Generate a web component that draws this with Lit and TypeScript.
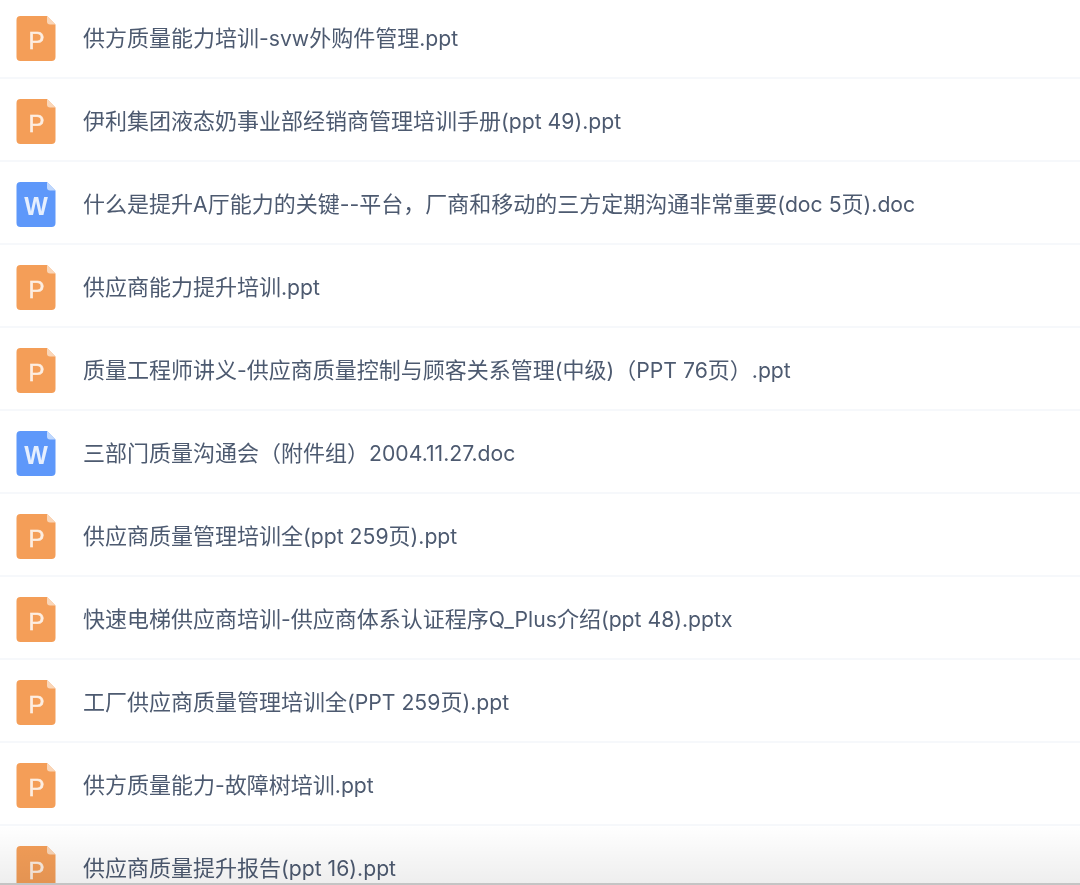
import { LitElement, html, css, svg } from "lit";
import { customElement } from "lit/decorators.js";

const rows: [string, string][] = [
  ["p", "供方质量能力培训-svw外购件管理.ppt"],
  ["p", "伊利集团液态奶事业部经销商管理培训手册(ppt 49).ppt"],
  ["w", "什么是提升A厅能力的关键--平台，厂商和移动的三方定期沟通非常重要(doc 5页).doc"],
  ["p", "供应商能力提升培训.ppt"],
  ["p", "质量工程师讲义-供应商质量控制与顾客关系管理(中级)（PPT 76页）.ppt"],
  ["w", "三部门质量沟通会（附件组）2004.11.27.doc"],
  ["p", "供应商质量管理培训全(ppt 259页).ppt"],
  ["p", "快速电梯供应商培训-供应商体系认证程序Q_Plus介绍(ppt 48).pptx"],
  ["p", "工厂供应商质量管理培训全(PPT 259页).ppt"],
  ["p", "供方质量能力-故障树培训.ppt"],
  ["p", "供应商质量提升报告(ppt 16).ppt"],
];

@customElement("app-root")
export class AppRoot extends LitElement {
  static styles = css`
    :host { display: block; width: 1080px; height: 885px; overflow: hidden; position: relative; background: #fff; }
    .list { display: flex; flex-direction: column; }
    .row { display: flex; align-items: center; padding: 20px 0 16px 16px; gap: 27px; border-bottom: 2px solid #f6f8fb; }
    .row:first-child { padding-top: 16px; }
    .row svg { flex: none; width: 40px; height: 45px; display: block; filter: blur(.5px); }
    .name { font: 22px/30px Inter, "Noto Sans CJK SC", sans-serif; color: #4d5a70; white-space: nowrap; position: relative; top: -1px; filter: blur(.25px); }
    .lat { font-size: 21.200px; }
    .shade { position: absolute; left: 0; right: 0; bottom: 0; height: 60px; background: linear-gradient(to bottom, rgba(0,0,0,0), rgba(0,0,0,.065)); border-bottom: 2px solid #c4c4c4; box-sizing: border-box; pointer-events: none; }
  `;

  icon(kind: string) {
    const main = kind === "p" ? "#f49e58" : "#5e98fa";
    const fold = kind === "p" ? "#fad6b8" : "#c0d8fd";
    const letter = kind === "p"
      ? svg`<text x="20.500" y="33" text-anchor="middle" font-family="Liberation Sans, sans-serif" font-size="24" stroke="#fdeee2" stroke-width=".5" fill="#fdeee2">P</text>`
      : svg`<text x="20" y="33" text-anchor="middle" font-family="Liberation Sans, sans-serif" font-weight="700" font-size="25" fill="#e6effe">W</text>`;
    return html`<svg viewBox="0 0 40 45">
      <path d="M4.500 0H31L39.500 8.500V41a4 4 0 0 1-4 4H4.500a4 4 0 0 1-4-4V4a4 4 0 0 1 4-4Z" fill=${main}></path>
      <path d="M31 0L39.500 8.500H34a3 3 0 0 1-3-3Z" fill=${fold}></path>
      ${letter}
    </svg>`;
  }

  label(t: string) {
    return t.split(/([\x20-\x7e]+)/).map((part, i) => (i % 2 ? html`<span class="lat">${part}</span>` : part));
  }

  render() {
    return html`<div class="list">
        ${rows.map(([k, t]) => html`<div class="row">${this.icon(k)}<span class="name">${this.label(t)}</span></div>`)}
      </div>
      <div class="shade"></div>`;
  }
}
